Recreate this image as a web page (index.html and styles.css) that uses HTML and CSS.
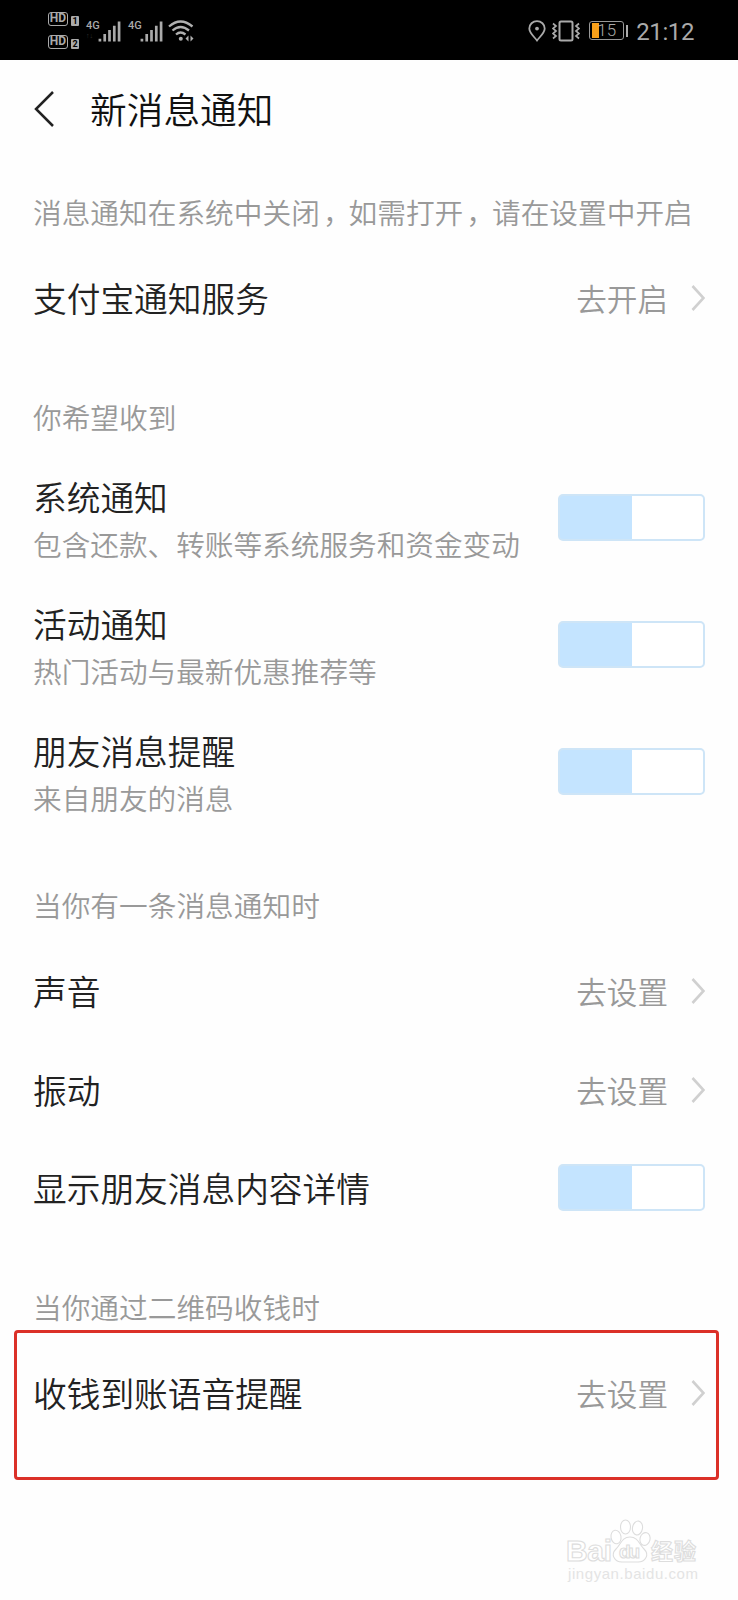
FILE: index.html
```html
<!DOCTYPE html>
<html lang="zh-CN">
<head>
<meta charset="utf-8">
<title>新消息通知</title>
<link rel="stylesheet" href="styles.css">
</head>
<body>
<svg width="0" height="0" class="defs">
  <symbol id="chevron" viewBox="0 0 14 26"><path d="M1.500 1 12.500 13 1.500 25" fill="none" stroke="#d0d0d0" stroke-width="2.600"/></symbol>
  <symbol id="signal" viewBox="0 0 24 22"><path d="M2 19v3M7 14v8M12 10v12M17 5.500v16.500M22 1v21" fill="none" stroke="#aaa" stroke-width="2.800"/></symbol>
</svg>
<header class="status">
  <div class="hd">
    <div class="hd-row"><span class="hd-box">HD</span><span class="hd-num">1</span></div>
    <div class="hd-row"><span class="hd-box">HD</span><span class="hd-num">2</span></div>
  </div>
  <div class="net"><div class="gen"><span>4G</span><small>↑↓</small></div><svg width="23" height="22"><use href="#signal"/></svg></div>
  <div class="net net2"><div class="gen"><span>4G</span></div><svg width="23" height="22"><use href="#signal"/></svg></div>
  <svg class="wifi" width="26" height="22" viewBox="0 0 26 22" fill="none" stroke="#b0b0b0" stroke-width="2.300">
    <path d="M1 6.500Q12.500-3.500 24.500 6.500M4.500 10.500Q12.500 3.500 21 10.500M8 14.500Q12.500 10.500 17.500 14.500"/>
    <circle cx="12.800" cy="18.800" r="2" fill="#b0b0b0" stroke="none"/><path d="M20.500 15.500v6l-3-3ZM22.500 21.500v-6l3 3Z" fill="#b0b0b0" stroke="none"/>
  </svg>
  <div class="spacer"></div>
  <svg class="pin" width="18" height="22" viewBox="0 0 18 22" fill="none" stroke="#aaa" stroke-width="1.800"><path d="M9 20.500C6 16.500 1.300 13 1.300 8.500a7.700 7.400 0 0 1 15.400 0C16.700 13 12 16.500 9 20.500Z"/><circle cx="9" cy="8.600" r="1.900" fill="#aaa" stroke="none"/></svg>
  <svg class="vibe" width="28" height="22" viewBox="0 0 28 22" fill="none" stroke="#aaa"><rect x="7.500" y="1.500" width="13" height="19" rx="1.500" stroke-width="2"/><path d="M1 3.500l3 2.500-3 2.500 3 2.500-3 2.500 3 2.500-3 2.500M27 3.500l-3 2.500 3 2.500-3 2.500 3 2.500-3 2.500 3 2.500" stroke-width="1.700"/></svg>
  <div class="battery"><i class="charge"></i><span>15</span></div><i class="cap"></i>
  <time class="clock">21:12</time>
</header>
<nav class="titlebar">
  <svg width="20" height="36" viewBox="0 0 20 36" fill="none" stroke="#222" stroke-width="2.500"><path d="M19 1 2 18 19 35"/></svg>
  <h1>新消息通知</h1>
</nav>
<main>
  <p class="caption notice">消息通知在系统中关闭<span class="comma">，</span>如需打开<span class="comma">，</span>请在设置中开启</p>
  <div class="row"><span class="label">支付宝通知服务</span><span class="value">去开启</span><svg class="arrow" width="14" height="26"><use href="#chevron"/></svg></div>

  <h2 class="caption">你希望收到</h2>
  <div class="row tall"><div class="texts"><span class="label">系统通知</span><span class="sub">包含还款、转账等系统服务和资金变动</span></div><span class="toggle"></span></div>
  <div class="row tall"><div class="texts"><span class="label">活动通知</span><span class="sub">热门活动与最新优惠推荐等</span></div><span class="toggle"></span></div>
  <div class="row tall"><div class="texts"><span class="label">朋友消息提醒</span><span class="sub">来自朋友的消息</span></div><span class="toggle"></span></div>

  <h2 class="caption">当你有一条消息通知时</h2>
  <div class="row"><span class="label">声音</span><span class="value">去设置</span><svg class="arrow" width="14" height="26"><use href="#chevron"/></svg></div>
  <div class="row"><span class="label">振动</span><span class="value">去设置</span><svg class="arrow" width="14" height="26"><use href="#chevron"/></svg></div>
  <div class="row"><span class="label">显示朋友消息内容详情</span><span class="toggle"></span></div>

  <h2 class="caption">当你通过二维码收钱时</h2>
  <div class="row marked"><span class="label">收钱到账语音提醒</span><span class="value">去设置</span><svg class="arrow" width="14" height="26"><use href="#chevron"/></svg></div>
</main>
<footer class="watermark">
  <svg width="138" height="68" viewBox="0 0 138 68">
    <g fill="#fff" stroke="#ddd" stroke-width="1.100">
      <ellipse cx="50" cy="20" rx="5" ry="6.800" transform="rotate(-10 50 20)"/><ellipse cx="59.500" cy="10" rx="5" ry="7"/><ellipse cx="71.500" cy="11" rx="5" ry="7" transform="rotate(10 71.500 11)"/><ellipse cx="79" cy="22" rx="5" ry="6.500" transform="rotate(15 79 22)"/>
      <path d="M64 20c8 0 9 7 14 12 6 6 1 13-6 13h-16c-7 0-12-7-6-13 5-5 6-12 14-12Z"/>
      <text class="wm-logo" x="0" y="44" textLength="46">Bai</text>
      <text class="wm-du" x="53" y="41" textLength="21">du</text>
      <text class="wm-cn" x="85" y="42" textLength="45">经验</text>
    </g>
    <text class="wm-url" x="2" y="62" textLength="130">jingyan.baidu.com</text>
  </svg>
</footer>
</body>
</html>
```
FILE: styles.css
```css
* { box-sizing: border-box; }
body {
  position: relative;
  margin: 0;
  width: 738px;
  height: 1600px;
  overflow: hidden;
  background: #fefefe;
  color: #222;
  font-family: "Noto Sans CJK SC", sans-serif;
  font-weight: 350;
}
h1, h2, p { margin: 0; font-weight: 350; }
svg { display: block; flex: none; }
.defs { position: absolute; }

.status {
  display: flex;
  align-items: center;
  height: 60px;
  padding: 1px 44px 0 48px;
  background: #000;
  color: #aaa;
  font-family: Roboto, sans-serif;
}
.hd { display: flex; flex-direction: column; gap: 9px; }
.hd-row { display: flex; align-items: flex-end; gap: 3px; height: 14px; }
.hd-box {
  width: 20px;
  height: 14px;
  border: 1.5px solid #aaa;
  border-radius: 3px;
  font: 700 12px/11px Roboto, sans-serif;
  text-align: center;
}
.hd-num {
  width: 8px;
  height: 10px;
  border-radius: 1px;
  background: #aaa;
  color: #000;
  font: 700 9px/10px Roboto, sans-serif;
  text-align: center;
}
.net { display: flex; align-items: flex-end; height: 22px; margin: 0 0 0 7px; }
.net2 { margin-left: 7px; }
.gen { width: 12px; height: 22px; font: 500 11px/11px Roboto, sans-serif; }
.gen span, .gen small { display: block; }
.gen small { margin-top: 1px; color: #333; font-size: 7px; line-height: 9px; }
.wifi { margin-left: 5px; }
.spacer { flex: 1; }
.vibe { margin-left: 6px; }
.battery {
  position: relative;
  display: flex;
  align-items: center;
  justify-content: center;
  width: 35px;
  height: 19px;
  margin-left: 9px;
  border: 1px solid #999;
  border-radius: 3px;
  font-size: 17px;
  line-height: 19px;
}
.battery span { position: relative; }
.charge { position: absolute; left: 2px; top: 1px; width: 7px; height: 15px; background: #f9a11b; }
.cap { width: 2px; height: 12px; margin-left: 2px; background: #aaa; }
.clock { margin: 2px 0 0 8px; font-size: 24px; font-weight: 400; line-height: 30px; letter-spacing: -.4px; }

.titlebar { display: flex; align-items: center; gap: 36px; height: 98px; padding-left: 34px; }
.titlebar h1 { margin-top: -3px; color: #111; font-size: 36.7px; line-height: 54px; }

main { padding: 26.5px 33px 0; }
.caption { height: 54px; margin: 43px 0 10px; color: #999; font-size: 28.7px; line-height: 54px; white-space: nowrap; }
.notice { margin-top: 0; }
.comma { position: relative; left: 3px; }
.row { display: flex; align-items: center; height: 98.2px; }
.row.tall { height: 127.2px; }
.label { flex: 1; font-size: 33.7px; line-height: 48px; white-space: nowrap; }
.texts { flex: 1; display: flex; flex-direction: column; padding-top: 5px; }
.texts .label { flex: none; }
.sub { color: #999; font-size: 28.65px; line-height: 46px; white-space: nowrap; }
.value { color: #999; font-size: 30.6px; line-height: 48px; }
.arrow { margin-left: 23px; }
.toggle {
  width: 147px;
  height: 47px;
  border: 2px solid #cee5f7;
  border-radius: 5px;
  background: linear-gradient(90deg, #c4e4ff 72px, #fff 72px);
}
.marked { position: relative; }
.marked::after {
  content: "";
  position: absolute;
  box-sizing: border-box;
  left: -19px;
  top: -13.5px;
  width: 705px;
  height: 150px;
  border: 3px solid #db3028;
  border-radius: 4px;
}

.watermark { position: absolute; left: 566px; top: 1517px; }
.wm-logo { font: 700 30px "Liberation Sans", sans-serif; }
.wm-du { font: 700 19px "Liberation Sans", sans-serif; }
.wm-cn { font: 700 22px "Noto Sans CJK SC", sans-serif; }
.wm-url { fill: #e4e4e4; font: 400 15px "Liberation Sans", sans-serif; }
```
